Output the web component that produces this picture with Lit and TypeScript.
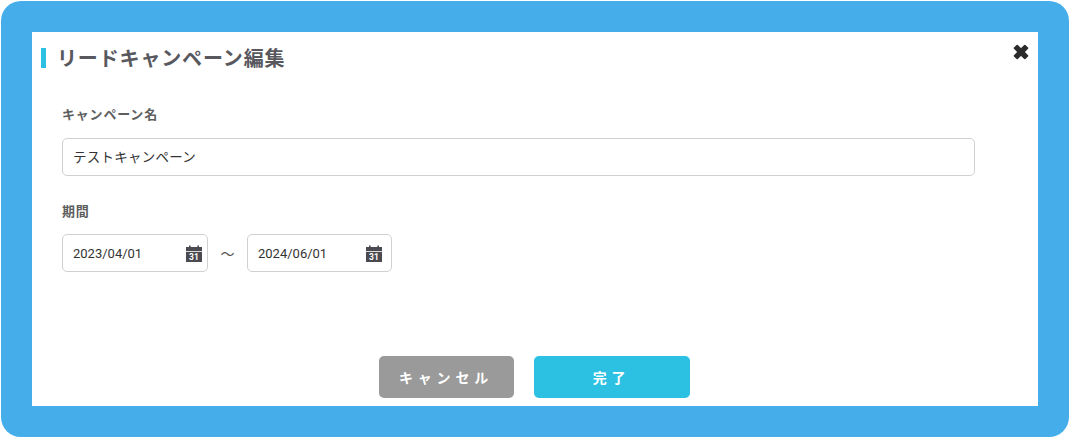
import { LitElement, html, css } from 'lit';
import { customElement } from 'lit/decorators.js';

const calendarIcon = html`<svg class="cal" viewBox="0 0 16 18" width="16" height="18" aria-hidden="true">
  <path fill="#4a4a50" d="M0 3h3V1.5h1.6V3h6.8V1.5H13V3h3v4H0z" />
  <rect x="0" y="7.8" width="16" height="10.2" fill="#4a4a50" />
  <text x="8" y="16.4" text-anchor="middle" class="cal-num">31</text>
</svg>`;

@customElement('app-root')
export class AppRoot extends LitElement {
  static styles = css`
    :host {
      display: block;
      width: 1070px;
      height: 438px;
      font-family: Roboto, "Noto Sans CJK JP", sans-serif;
      background: #fff;
    }
    .frame {
      box-sizing: border-box;
      width: 1068px;
      height: 436px;
      margin: 1px;
      padding: 31px;
      background: #44adea;
      border-radius: 20px;
    }
    .panel {
      position: relative;
      box-sizing: border-box;
      height: 374px;
      background: #fff;
      display: flex;
      flex-direction: column;
      padding: 16px 0 8px 9px;
    }
    .title {
      margin: 0;
      height: 20px;
      line-height: 22px;
      padding-left: 11px;
      border-left: 5px solid #2cc0e2;
      font-size: 20px;
      font-weight: 700;
      letter-spacing: 0.85px;
      color: #58585e;
    }
    .form {
      flex: 1;
      padding: 38px 0 0 21px;
    }
    .label {
      font-size: 13px;
      font-weight: 700;
      line-height: 18px;
      color: #5e5e5e;
      letter-spacing: 0.8px;
    }
    .field {
      box-sizing: border-box;
      height: 38px;
      border: 1px solid #d0d0d0;
      border-radius: 5px;
      display: flex;
      align-items: center;
      padding: 0 10px;
      font-size: 13.5px;
      color: #333;
      background: #fff;
    }
    .name {
      width: 913px;
      margin: 14px 0 27px;
      letter-spacing: 0.25px;
      padding-bottom: 2px;
    }
    .dates {
      display: flex;
      align-items: center;
      margin-top: 13px;
    }
    .date {
      width: 146px;
      justify-content: space-between;
      font-size: 13px;
    }
    .date.to {
      width: 145px;
    }
    .cal {
      margin-right: -5px;
    }
    .to .cal {
      margin-right: -1px;
    }
    .cal-num {
      font: 700 8.5px Roboto, sans-serif;
      fill: #fff;
    }
    .tilde {
      width: 39px;
      text-align: center;
      font-size: 14px;
      color: #555;
    }
    .actions {
      display: flex;
      justify-content: center;
      gap: 20px;
      margin-left: -11px;
    }
    .btn {
      height: 42px;
      border: none;
      border-radius: 5px;
      color: #fff;
      font-family: inherit;
      font-size: 14px;
      font-weight: 700;
      letter-spacing: 4.8px;
      padding: 0;
    }
    .cancel {
      width: 135px;
      background: #9a9a9a;
    }
    .done {
      width: 156px;
      background: #2cc0e2;
    }
    .close {
      position: absolute;
      top: 12px;
      right: 9px;
      width: 16px;
      height: 16px;
      padding: 0;
      border: none;
      background: none;
    }
  `;

  render() {
    return html`
      <div class="frame">
        <div class="panel">
          <h1 class="title">リードキャンペーン編集</h1>
          <button class="close" aria-label="閉じる">
            <svg viewBox="0 0 16 16" width="16" height="16">
              <path d="M4.2 1.6 8 5.4 11.8 1.6 14.4 4.2 10.6 8 14.4 11.8 11.8 14.4 8 10.6 4.2 14.4 1.6 11.8 5.4 8 1.6 4.2Z" fill="#2b2b2b" stroke="#2b2b2b" stroke-width="1.8" stroke-linejoin="round" />
            </svg>
          </button>
          <div class="form">
            <div class="label">キャンペーン名</div>
            <div class="field name">テストキャンペーン</div>
            <div class="label">期間</div>
            <div class="dates">
              <div class="field date">2023/04/01 ${calendarIcon}</div>
              <span class="tilde">～</span>
              <div class="field date to">2024/06/01 ${calendarIcon}</div>
            </div>
          </div>
          <div class="actions">
            <button class="btn cancel">キャンセル</button>
            <button class="btn done">完了</button>
          </div>
        </div>
      </div>
    `;
  }
}
